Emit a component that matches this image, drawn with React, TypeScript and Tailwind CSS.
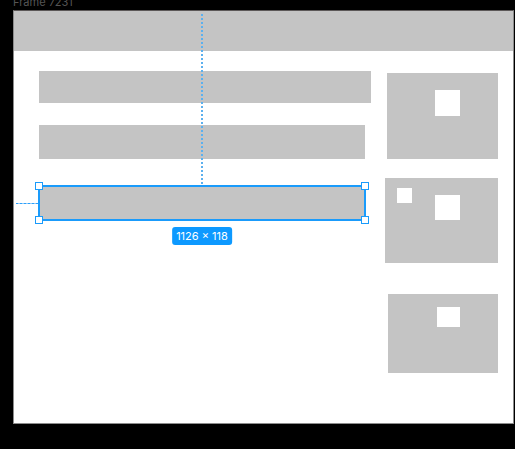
function Handle({ place }: { place: string }) {
  return <span className={`absolute size-2 border border-[#1a9bfb] bg-white ${place}`} />;
}

function Selection() {
  return (
    <div className="relative -ml-px mr-[5px] mt-[26px] h-9 border-2 border-[#1a9bfb] bg-[#c4c4c4]">
      <span className="absolute bottom-full left-1/2 mb-[3px] h-[170px] w-[2px] -translate-x-1/2 bg-[repeating-linear-gradient(to_top,#5cb0ee_0_2px,transparent_2px_4px)]" />
      <span className="absolute right-full top-1/2 mr-[2px] h-px w-[22px] bg-[repeating-linear-gradient(to_left,#2ba0fa_0_2px,#8cc9fb_2px_4px)]" />
      <Handle place="-left-[5px] -top-[5px]" />
      <Handle place="-right-[5px] -top-[5px]" />
      <Handle place="-left-[5px] -bottom-[5px]" />
      <Handle place="-right-[5px] -bottom-[5px]" />
      <span className="absolute left-1/2 top-full mt-2 flex h-[18px] -translate-x-1/2 items-center whitespace-nowrap rounded-[3px] bg-[#0d99ff] px-1 text-[11px] leading-4 text-white">
        1126 × 118
      </span>
    </div>
  );
}

export default function App() {
  return (
    <main className="flex min-h-screen flex-col bg-black pb-[25px] pl-[13px] pr-px font-['Inter','Liberation_Sans',sans-serif]">
      <div className="flex h-[10px] items-end text-[11px] leading-4 text-[#555555]">Frame 7231</div>
      <section className="flex grow flex-col border border-[#8c8c8c] border-t-[#5c5858] bg-white">
        <header className="h-10 bg-[#c4c4c4]" />
        <div className="flex gap-[14px] pl-[25px] pr-[15px]">
          <div className="min-w-0 grow pt-5">
            <div className="h-8 bg-[#c4c4c4]" />
            <div className="mr-[6px] mt-[22px] h-[34px] bg-[#c4c4c4]" />
            <Selection />
          </div>
          <aside className="flex w-[113px] shrink-0 flex-col items-end pt-[22px]">
            <div className="flex h-[86px] w-[111px] justify-end bg-[#c4c4c4] pr-[38px] pt-[17px]">
              <div className="h-[26px] w-[25px] bg-white" />
            </div>
            <div className="mt-[19px] flex h-[85px] w-[113px] justify-between bg-[#c4c4c4] pl-3 pr-[38px]">
              <div className="mt-[10px] h-[15px] w-[15px] bg-white" />
              <div className="mt-[17px] h-[25px] w-[25px] bg-white" />
            </div>
            <div className="mt-[31px] flex h-[79px] w-[110px] justify-end bg-[#c4c4c4] pr-[38px] pt-[13px]">
              <div className="h-5 w-[23px] bg-white" />
            </div>
          </aside>
        </div>
      </section>
    </main>
  );
}
